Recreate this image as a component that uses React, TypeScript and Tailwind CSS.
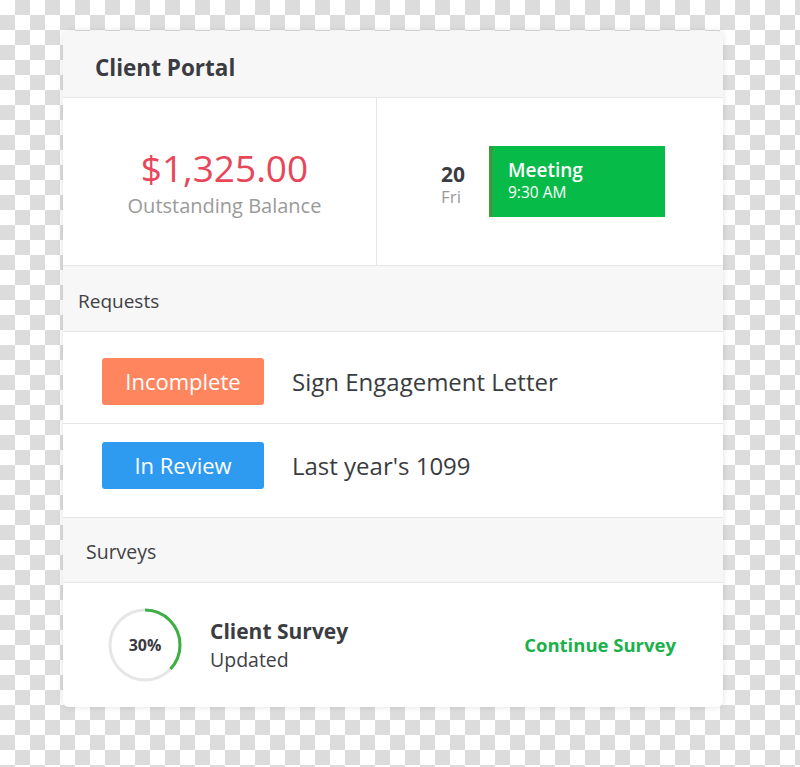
const font = { fontFamily: '"Open Sans", "Noto Sans", sans-serif' };

function SurveyRing({ percent }: { percent: number }) {
    const r = 35;
    const c = 2 * Math.PI * r;
    return (
        <div className="relative h-[74px] w-[74px] shrink-0">
            <svg width="74" height="74" viewBox="0 0 74 74">
                <circle cx="37" cy="37" r={r} fill="none" stroke="#e6e6e6" strokeWidth="3" />
                <circle
                    cx="37"
                    cy="37"
                    r={r}
                    fill="none"
                    stroke="#3cb043"
                    strokeWidth="3"
                    strokeDasharray={`${(c * percent) / 100} ${c}`}
                    transform="rotate(-90 37 37)"
                />
            </svg>
            {/* label over the ring */}
            <div className="absolute inset-0 flex items-center justify-center text-[16px] font-bold text-[#383a3f]">
                30%
            </div>
        </div>
    );
}

function RequestRow({ label, color, text, row }: { label: string; color: string; text: string; row: string }) {
    return (
        <div className={`flex items-center border-b border-[#e6e6e6] pl-[39px] ${row}`}>
            <div className={`flex h-[47px] w-[162px] items-center justify-center rounded-[3px] text-[22px] text-white ${color}`}>
                {label}
            </div>
            <div className="ml-[28px] text-[24px] text-[#3a3c40]">{text}</div>
        </div>
    );
}

export default function App() {
    return (
        <div
            style={font}
            className="min-h-[767px] w-[800px] bg-[repeating-conic-gradient(#dcdcdc_0_25%,#ffffff_0_50%)] bg-size-[30px_30px] pl-[63px] pt-[31px]"
        >
            {/* Card */}
            <div className="w-[660px] overflow-hidden rounded-md bg-white shadow-[0_0_6px_rgba(0,0,0,0.12)]">
                {/* Header */}
                <div className="flex h-[67px] items-center border-b border-[#e6e6e6] bg-[#f7f7f7] pl-[32px] pt-[7px]">
                    <div className="text-[22.5px] font-bold text-[#3a3c41]">Client Portal</div>
                </div>

                {/* Balance + meeting */}
                <div className="flex h-[168px] border-b border-[#e6e6e6]">
                    <div className="flex w-[314px] flex-col items-center justify-center border-r border-[#e6e6e6] pl-[10px]">
                        <div className="text-[37px] leading-[48px] text-[#e8475a]">$1,325.00</div>
                        <div className="text-[20px] leading-[28px] text-[#9a9a9a]">Outstanding Balance</div>
                    </div>
                    <div className="flex flex-1 items-center pl-[64px]">
                        <div className="flex w-[26px] flex-col items-start pt-[4px]">
                            <div className="text-[21px] font-bold leading-[26px] text-[#3a3c41]">20</div>
                            <div className="text-[17px] leading-[20px] text-[#9a9a9a]">Fri</div>
                        </div>
                        <div className="ml-[22px] flex h-[71px] w-[176px] flex-col justify-center border-l-4 border-[#3a9a3c] bg-[#07bb49] pb-[4px] pl-[15px] text-white">
                            <div className="text-[19px] font-semibold leading-[24px]">Meeting</div>
                            <div className="text-[15.5px] leading-[20px]">9:30 AM</div>
                        </div>
                    </div>
                </div>

                {/* Requests */}
                <div className="flex h-[66px] items-center border-b border-[#e6e6e6] bg-[#f7f7f7] pl-[15px] pt-[5px]">
                    <div className="text-[19px] text-[#3f4145]">Requests</div>
                </div>
                <RequestRow label="Incomplete" color="bg-[#ff855f]" text="Sign Engagement Letter" row="h-[92px] pt-[8px]" />
                <RequestRow label="In Review" color="bg-[#2f9bf0]" text="Last year's 1099" row="h-[94px] pb-[10px]" />

                {/* Surveys */}
                <div className="flex h-[65px] items-center border-b border-[#e6e6e6] bg-[#f7f7f7] pl-[23px] pt-[3px]">
                    <div className="text-[19.5px] text-[#3f4145]">Surveys</div>
                </div>
                <div className="flex h-[124px] items-center pl-[45px] pr-[47px]">
                    <SurveyRing percent={37} />
                    <div className="ml-[28px] flex flex-1 flex-col">
                        <div className="text-[21px] font-bold leading-[30px] text-[#3a3c41]">Client Survey</div>
                        <div className="text-[19.5px] leading-[28px] text-[#3f4145]">Updated</div>
                    </div>
                    <div className="text-[18.5px] font-bold text-[#1bb14a]">Continue Survey</div>
                </div>
            </div>
        </div>
    );
}
